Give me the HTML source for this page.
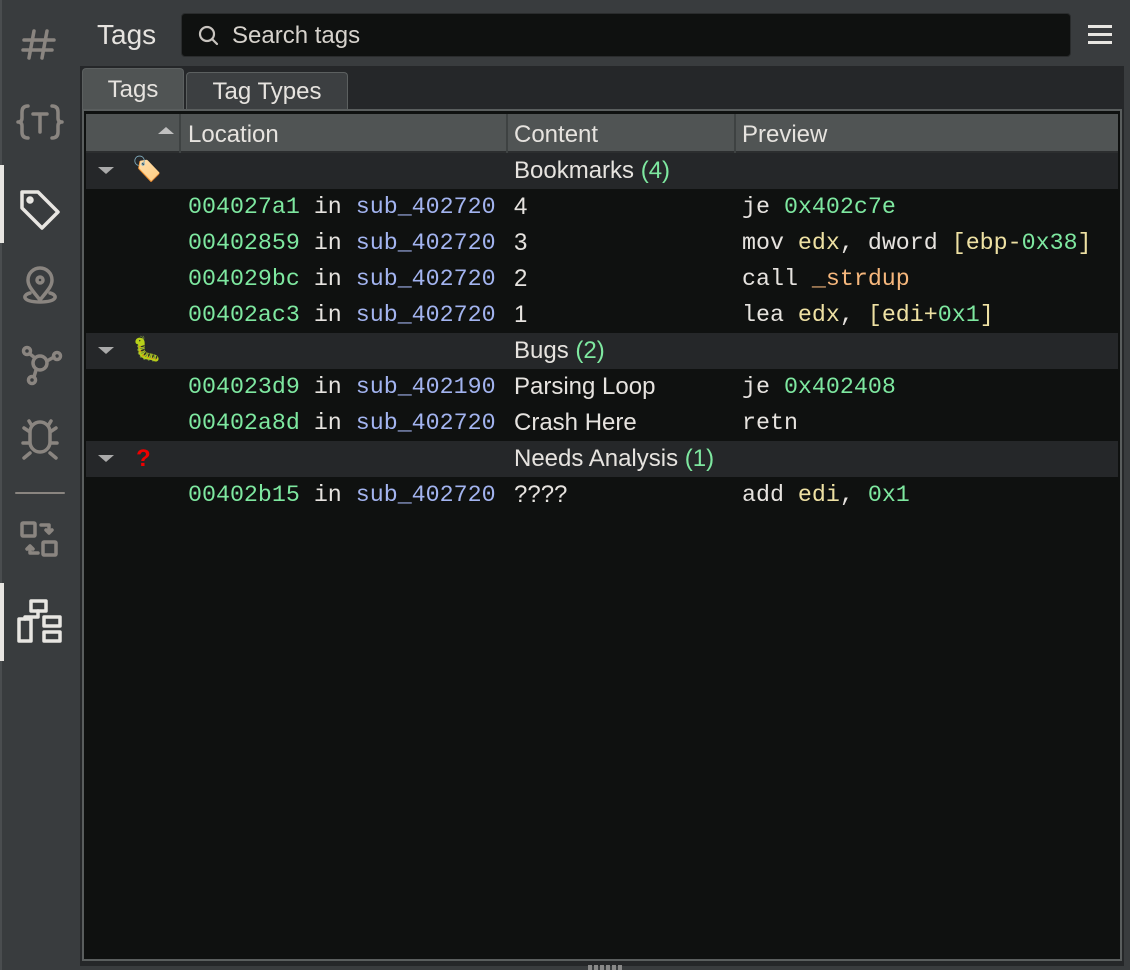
<!DOCTYPE html>
<html><head><meta charset="utf-8"><style>
*{margin:0;padding:0;box-sizing:border-box}
body{width:1130px;height:970px;background:#393c3e;position:relative;overflow:hidden;font-family:"Liberation Sans",sans-serif;color:#e6e3df}
.abs{position:absolute}
.side{left:0;top:0;width:80px;height:970px;background:#393c3e;border-left:2px solid #4a4d4f}
.mono{font-family:"Liberation Mono",monospace;font-size:23.3px}
.g{color:#7ee8a0}.b{color:#a3b4f0}.y{color:#eee1a3}.o{color:#f6b77c}
.row{position:absolute;left:86px;width:1032px;height:36px;line-height:36px;white-space:nowrap}
.grp{background:#252729}
.t{position:absolute;top:0}
.sans{font-family:"Liberation Sans",sans-serif;font-size:24px}
</style></head><body>
<div class="abs side"></div>
<div class="abs" style="left:0;top:165px;width:4px;height:78px;background:#e8e6e2"></div>
<div class="abs" style="left:0;top:583px;width:4px;height:78px;background:#e8e6e2"></div>
<svg class="abs" style="left:0;top:0" width="80" height="700" fill="none" stroke="#8a8580" stroke-width="3.5" stroke-linecap="round" stroke-linejoin="round">
<path d="M34 31 L29 58 M47 31 L42 58 M24 40 L54 40 M23 50 L52 50"/>
<path d="M28 106 q-6 0 -6 6 v6 q0 4 -4 4 q4 0 4 4 v6 q0 6 6 6 M52 106 q6 0 6 6 v6 q0 4 4 4 q-4 0 -4 4 v6 q0 6 -6 6 M33 114 h14 M40 114 v18"/>
<path d="M22 192 h16 l20 20 l-16 16 l-20 -20 z" stroke="#e8e6e2"/><circle cx="30" cy="200" r="2" stroke="#e8e6e2"/>
<path d="M40 300 c-8 -10 -12 -14 -12 -20 a12 12 0 0 1 24 0 c0 6 -4 10 -12 20z"/><circle cx="40" cy="280" r="3"/><path d="M30 293 c-8 2 -8 9 10 9 c18 0 18 -7 10 -9"/>
<circle cx="40" cy="363" r="7"/><circle cx="27" cy="351" r="3.5"/><circle cx="57" cy="356" r="3.5"/><circle cx="32" cy="380" r="3.5"/><path d="M30 354 L35 358 M54 357 L47 361 M34 377 L36 370"/>
<path d="M30 432 a10 10 0 0 1 20 0 v10 a10 10 0 0 1 -20 0 z M24 428 l6 4 M56 428 l-6 4 M23 443 h7 M57 443 h-7 M24 458 l6 -5 M56 458 l-6 -5 M32 426 l-3 -5 M48 426 l3 -5"/>
<path d="M16 493 h48" stroke-width="2"/>
<rect x="22" y="523" width="13" height="13" rx="1"/><rect x="43" y="542" width="13" height="13" rx="1"/><path d="M41 525 h8 v7 M46 530 l3 3 l3 -3 M38 553 h-8 v-7 M27 549 l3 -3 l3 3"/>
<g stroke="#e8e6e2"><rect x="31" y="601" width="15" height="10"/><rect x="19" y="619" width="12" height="22"/><rect x="44" y="617" width="16" height="9"/><rect x="44" y="632" width="16" height="9"/><path d="M38 611 v6 M25 619 v-2 h13"/></g>
</svg>
<div class="abs" style="left:97px;top:19px;font-size:28px">Tags</div>
<div class="abs" style="left:181px;top:13px;width:890px;height:44px;background:#0f1110;border:1px solid #2a2c2d;border-radius:4px"></div>
<svg class="abs" style="left:197px;top:24px" width="24" height="24" fill="none" stroke="#c8c4bf" stroke-width="2.2"><circle cx="10" cy="10" r="7"/><path d="M15 15 l5 5" stroke-linecap="round"/></svg>
<div class="abs sans" style="left:232px;top:22px;color:#d6d2cc">Search tags</div>
<div class="abs" style="left:1088px;top:25px;width:24px;height:3px;background:#e8e6e2"></div>
<div class="abs" style="left:1088px;top:33px;width:24px;height:3px;background:#e8e6e2"></div>
<div class="abs" style="left:1088px;top:41px;width:24px;height:3px;background:#e8e6e2"></div>
<div class="abs" style="left:80px;top:66px;width:1044px;height:900px;background:#252729"></div>
<div class="abs sans" style="left:82px;top:68px;width:102px;height:44px;background:#505454;border:1px solid #5c6060;border-bottom:none;border-radius:4px 4px 0 0;text-align:center;line-height:42px">Tags</div>
<div class="abs sans" style="left:186px;top:72px;width:162px;height:38px;background:#3c3f41;border:1px solid #5c6060;border-bottom:none;border-radius:4px 4px 0 0;text-align:center;line-height:38px">Tag Types</div>
<div class="abs" style="left:82px;top:109px;width:1040px;height:852px;background:#0f1110;border:2px solid #5a5e5e"></div>
<div class="abs" style="left:86px;top:114px;width:1032px;height:39px;background:#505454;border-bottom:2px solid #2c2e2f"></div>
<div class="abs" style="left:179px;top:114px;width:2px;height:39px;background:#3e4242"></div>
<div class="abs" style="left:506px;top:114px;width:2px;height:39px;background:#3e4242"></div>
<div class="abs" style="left:734px;top:114px;width:2px;height:39px;background:#3e4242"></div>
<div class="abs" style="left:158px;top:127px;width:0;height:0;border-left:8px solid transparent;border-right:8px solid transparent;border-bottom:7px solid #c0c0c0"></div>
<div class="abs sans" style="left:188px;top:121px">Location</div>
<div class="abs sans" style="left:514px;top:121px">Content</div>
<div class="abs sans" style="left:742px;top:121px">Preview</div>

<div class="row grp" style="top:153px"><span class="t" style="left:12px;top:14px;width:0;height:0;border-left:8px solid transparent;border-right:8px solid transparent;border-top:7px solid #aaa"></span><span class="t" style="left:46px;top:2px;font-size:24px;line-height:30px">🏷️</span><span class="t sans" style="left:428px">Bookmarks <span class="g">(4)</span></span></div>
<div class="row mono" style="top:189px"><span class="t" style="left:102px"><span class="g">004027a1</span> in <span class="b">sub_402720</span></span><span class="t sans" style="left:428px">4</span><span class="t" style="left:656px">je <span class="g">0x402c7e</span></span></div>
<div class="row mono" style="top:225px"><span class="t" style="left:102px"><span class="g">00402859</span> in <span class="b">sub_402720</span></span><span class="t sans" style="left:428px">3</span><span class="t" style="left:656px">mov <span class="y">edx</span>, dword <span class="y">[ebp-</span><span class="g">0x38</span><span class="y">]</span></span></div>
<div class="row mono" style="top:261px"><span class="t" style="left:102px"><span class="g">004029bc</span> in <span class="b">sub_402720</span></span><span class="t sans" style="left:428px">2</span><span class="t" style="left:656px">call <span class="o">_strdup</span></span></div>
<div class="row mono" style="top:297px"><span class="t" style="left:102px"><span class="g">00402ac3</span> in <span class="b">sub_402720</span></span><span class="t sans" style="left:428px">1</span><span class="t" style="left:656px">lea <span class="y">edx</span>, <span class="y">[edi+</span><span class="g">0x1</span><span class="y">]</span></span></div>
<div class="row grp" style="top:333px"><span class="t" style="left:12px;top:14px;width:0;height:0;border-left:8px solid transparent;border-right:8px solid transparent;border-top:7px solid #aaa"></span><span class="t" style="left:46px;top:2px;font-size:24px;line-height:30px">🐛</span><span class="t sans" style="left:428px">Bugs <span class="g">(2)</span></span></div>
<div class="row mono" style="top:369px"><span class="t" style="left:102px"><span class="g">004023d9</span> in <span class="b">sub_402190</span></span><span class="t sans" style="left:428px">Parsing Loop</span><span class="t" style="left:656px">je <span class="g">0x402408</span></span></div>
<div class="row mono" style="top:405px"><span class="t" style="left:102px"><span class="g">00402a8d</span> in <span class="b">sub_402720</span></span><span class="t sans" style="left:428px">Crash Here</span><span class="t" style="left:656px">retn</span></div>
<div class="row grp" style="top:441px"><span class="t" style="left:12px;top:14px;width:0;height:0;border-left:8px solid transparent;border-right:8px solid transparent;border-top:7px solid #aaa"></span><span class="t sans" style="left:50px;color:#e00;font-weight:bold;font-size:24px">?</span><span class="t sans" style="left:428px">Needs Analysis <span class="g">(1)</span></span></div>
<div class="row mono" style="top:477px"><span class="t" style="left:102px"><span class="g">00402b15</span> in <span class="b">sub_402720</span></span><span class="t sans" style="left:428px">????</span><span class="t" style="left:656px">add <span class="y">edi</span>, <span class="g">0x1</span></span></div>
<div class="abs" style="left:588px;top:965px;width:34px;height:5px;background:repeating-linear-gradient(90deg,#888 0 4px,transparent 4px 6px)"></div>
</body></html>
